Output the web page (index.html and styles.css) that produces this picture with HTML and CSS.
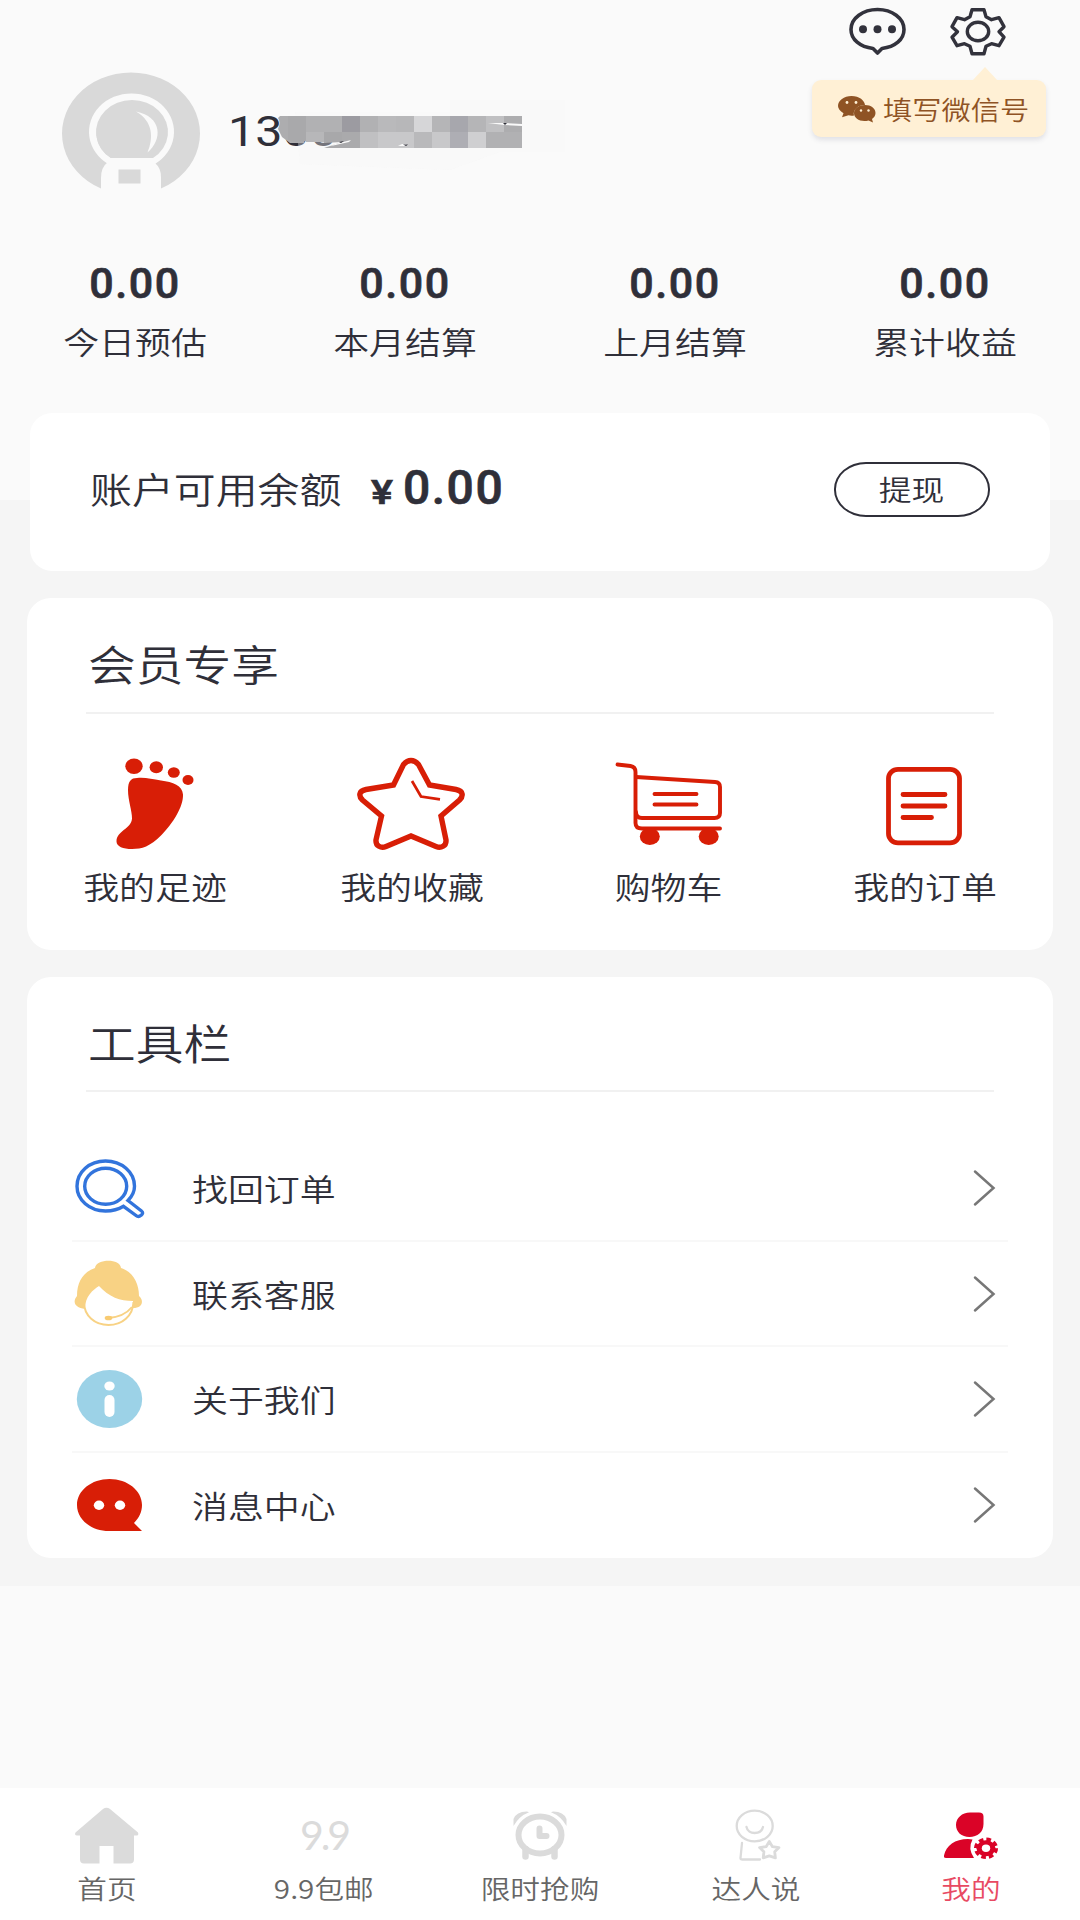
FILE: index.html
```html
<!DOCTYPE html>
<html lang="zh-CN">
<head>
<meta charset="utf-8">
<title>我的</title>
<link rel="stylesheet" href="styles.css">
</head>
<body>
<div class="page">
  <header class="profile">
    <div class="avatar">
      <svg width="140" height="120" viewBox="62 73 140 120">
        <path d="M101 188.500A69 61 0 1 1 161 188.500V177q0-9-6-14H109q-6 5-6 14z" fill="#d9d9d9"/>
        <path d="M108 164A42.500 38.500 0 1 1 155 164z" fill="#fafafa"/>
        <path d="M111 158A30 28.500 0 1 1 142 158z" fill="#d9d9d9"/>
        <path d="M111 158A36 32 0 1 1 153 158z" fill="#d9d9d9"/>
        <path d="M136 111.500c26 5 27 28 11.500 41 6-14 6-31-11.500-41z" fill="#fafafa"/>
        <path d="M101 193v-15q0-11 7-16h44q7 5 7 16v15z" fill="#fafafa"/>
        <path d="M118.500 169.500h22v14h-22z" fill="#d9d9d9"/>
      </svg>
    </div>
    <div class="phone">
      <span class="phone-number">1300</span>
      <svg class="mosaic" width="340" height="90" viewBox="270 90 340 90">
        <path d="M295 112h155v-12h115v52h-65l-50 18-150-6z" fill="#f5f5f5" opacity=".35"/>
        <path d="M280 116h24v27h-14l-8-6-4-8q3-7 0-11z" fill="#adadaf"/>
        <path d="M288 116h18v25l-12 1-6-2z" fill="#a9a9ab"/>
        <path d="M306 116h36v16h-36z" fill="#b1b1b3"/>
        <path d="M306 132h18v10h-18z" fill="#b7b7b9"/>
        <path d="M324 132h18v10l-18 1z" fill="#a8a8aa"/>
        <path d="M342 116h18v16h-18z" fill="#9c9ba1"/>
        <path d="M360 116h18v16h-18z" fill="#b1b1b3"/>
        <path d="M378 116h18v16h-18z" fill="#b9b9bb"/>
        <path d="M396 116h18v16h-18z" fill="#b7b7b9"/>
        <path d="M414 116h18v16h-18z" fill="#d6d6d8"/>
        <path d="M432 116h18v16h-18z" fill="#b5b5b7"/>
        <path d="M450 116h18v16h-18z" fill="#a7a7ad"/>
        <path d="M468 116h18v16h-18z" fill="#b5b5b7"/>
        <path d="M486 116h18v16h-18z" fill="#c0c0c2"/>
        <path d="M504 116h18v16h-18z" fill="#adadaf"/>
        <path d="M324 148l18-6v-10h18v16z" fill="#aaaaac"/>
        <path d="M360 132h18v16h-18z" fill="#c0c0c2"/>
        <path d="M378 132h36v16h-36z" fill="#c8c8ca"/>
        <path d="M414 132h18v16h-18z" fill="#b9b9bb"/>
        <path d="M432 132h18v16h-18z" fill="#c8c8ca"/>
        <path d="M450 132h18v16h-18z" fill="#aeaeb4"/>
        <path d="M468 132h18v16h-18z" fill="#cfcfd1"/>
        <path d="M486 132h36v16h-36z" fill="#b1b1b3"/>
        <path d="M335 144l16-4-2 2-18 4zM488 123l15 0 19 1v2l-18-1zM398 146l4-2h5l-2 2z" fill="#fafafa"/>
        <path d="M339 142l5-1-3 2zM503 123h4l-2 2zM403 144.500h5l-2 1.500z" fill="#2f2f38"/>
      </svg>
    </div>
    <div class="actions">
      <svg width="58" height="50" viewBox="848 7 58 50" fill="none" stroke="#32323c" stroke-width="3.600" stroke-linejoin="round">
        <path d="M877.500 53l-4.500-4.500C860 47 851 39.500 851 29.500 851 18 863 9.500 877.500 9.500S904 18 904 29.500C904 39.500 895 47 882 48.500z"/>
        <g fill="#32323c" stroke="none"><circle cx="863" cy="29.300" r="4"/><circle cx="877.500" cy="29.300" r="4"/><circle cx="892" cy="29.300" r="4"/></g>
      </svg>
      <svg width="58" height="50" viewBox="949 7 58 50" fill="none" stroke="#32323c" stroke-width="3.400" stroke-linejoin="round">
        <path d="M972 9.700h12l2 7 5.500 3 7.500-2 5 9-5 5 5 5.500-5 8.500-7.500-2-5.500 2.500-2 7.500h-12l-2-7.500-5.500-2.500-7.500 2-5-8.500 5.500-5.500-5.500-5 5-9 7.500 2 5.500-3z"/>
        <ellipse cx="978" cy="31.500" rx="10.700" ry="9.300"/>
      </svg>
    </div>
    <div class="tip">
      <svg width="38" height="28" viewBox="838 95 38 28">
        <path d="M851.500 96c8 0 13 4.500 13.500 9-7 0-12.500 5-11 10.500-2 .3-4 .2-5.500-.2l-6.500 2 1.500-4C840 111 838 108.500 838 106c0-5.500 6-10 13.500-10z" fill="#8f5324"/>
        <path d="M865 105c6 0 10.500 3.500 10.500 8 0 2.500-1.500 4.500-3.500 6l1 3.500-4.500-2c-8 2-14.500-2-14.500-7.500 0-4.500 5-8 11-8z" fill="#8f5324"/>
        <g fill="#fff0d5"><circle cx="847" cy="102.500" r="1.400"/><circle cx="856" cy="102.500" r="1.400"/><circle cx="861" cy="110.500" r="1.200"/><circle cx="868.500" cy="110.500" r="1.200"/></g>
      </svg>
      <span class="tip-text">填写微信号</span>
    </div>
  </header>

  <section class="stats">
    <div class="stat"><b class="stat-value">0.00</b><span class="stat-label">今日预估</span></div>
    <div class="stat"><b class="stat-value">0.00</b><span class="stat-label">本月结算</span></div>
    <div class="stat"><b class="stat-value">0.00</b><span class="stat-label">上月结算</span></div>
    <div class="stat"><b class="stat-value">0.00</b><span class="stat-label">累计收益</span></div>
  </section>

  <section class="card balance">
    <span class="balance-label">账户可用余额</span>
    <span class="balance-sum"><span class="yen">¥</span><span class="amount">0.00</span></span>
    <span class="withdraw"><span class="withdraw-text">提现</span></span>
  </section>

  <section class="card member">
    <h2 class="card-title"><span class="title-text">会员专享</span></h2>
    <div class="shortcuts">
      <div class="shortcut">
        <svg width="120" height="100" viewBox="95 755 120 100" fill="#d81e06">
          <ellipse cx="134" cy="766.300" rx="8.700" ry="7.700"/><ellipse cx="156.300" cy="767.300" rx="6.700" ry="6"/><ellipse cx="173.800" cy="772.500" rx="6" ry="5.200"/><ellipse cx="188" cy="780" rx="5.500" ry="4.900"/>
          <path d="M137 778c8-.8 15 1 24 2.500 12 1.500 21.500 5 22 14 .5 12-10 29-22 41-11 11-19 13.500-29 13.500-9 0-15.500-2.500-15.500-7.500 0-11 15-12.500 15.500-23 0-8-4-18-4-28.500 0-9 3-12 9-12z"/>
        </svg>
        <span class="shortcut-label">我的足迹</span>
      </div>
      <div class="shortcut">
        <svg width="120" height="100" viewBox="352 755 120 100" fill="none" stroke="#d81e06" stroke-width="5.400">
          <path d="M403.500 764.500Q407 760.500 411 760.500T418.500 764.500L429.500 785 456 789.500C463.500 791 463.500 796 459.500 800L441 816 446 840C446.500 846 441 848.500 436 846.500L411 836 386 846.500C381 848.500 375.500 846 376 840L381.500 816 362.500 800C358.500 796 358.500 791 366 789.500L393.500 785z"/>
          <path d="M412 781l9 15.500 19 2.800" stroke-width="2.700"/>
        </svg>
        <span class="shortcut-label">我的收藏</span>
      </div>
      <div class="shortcut">
        <svg width="120" height="100" viewBox="608 755 120 100" fill="none" stroke="#d81e06" stroke-width="3.900" stroke-linecap="round">
          <path d="M617.500 764.500l13 1.500q5 .8 5 6V823q0 5.500 6.500 5.500H720"/>
          <path d="M636 777l79 5q5 .3 5 5v26q0 5-5.500 5H642q-6 0-6-6M654.500 794h42M654.500 804.500h42"/>
          <g fill="#d81e06" stroke="none"><ellipse cx="649.800" cy="836.500" rx="10" ry="8.500"/><ellipse cx="708.700" cy="836.500" rx="10" ry="8.500"/></g>
        </svg>
        <span class="shortcut-label">购物车</span>
      </div>
      <div class="shortcut">
        <svg width="120" height="100" viewBox="865 755 120 100" fill="none" stroke="#d81e06" stroke-width="4.800" stroke-linecap="round">
          <rect x="888.500" y="769.300" width="71" height="73.500" rx="9.500" ry="9"/>
          <path d="M903 794.500h42M903 806h42M903 817.500h28.500"/>
        </svg>
        <span class="shortcut-label">我的订单</span>
      </div>
    </div>
  </section>

  <section class="card tools">
    <h2 class="card-title"><span class="title-text">工具栏</span></h2>
    <div class="rows">
      <div class="row">
        <svg width="74" height="72" viewBox="72 1152 74 72" fill="none" stroke="#3274dc" stroke-width="3.400">
          <path d="M128 1200.500l13.500 10.500q2.500 2-.5 4.300-2.500 2.200-5 .2L123.500 1206.300Q116 1211 105.500 1211C89.500 1211 77 1200 77 1186.300 77 1172 89.500 1161 105.500 1161S134.500 1172 134.500 1186.300Q134.500 1194 128 1200.500z"/>
          <ellipse cx="105.700" cy="1186.200" rx="21" ry="18"/>
        </svg>
        <span class="row-label">找回订单</span>
        <svg class="chevron" width="24" height="40" viewBox="0 0 24 40"><path d="M3 3.500L21.500 20 3 36.500"/></svg>
      </div>
      <div class="row">
        <svg width="74" height="72" viewBox="72 1258 74 72">
          <path d="M84 1302C84 1316 95 1325 108.500 1325S133 1316 133.500 1302" fill="none" stroke="#f8d284" stroke-width="2"/>
          <path d="M132 1307q-8 10-24 11" fill="none" stroke="#f8d284" stroke-width="2"/><ellipse cx="108.500" cy="1318" rx="3.800" ry="2.300" fill="#f8cb72"/>
          <path d="M95 1268c1-9 25-10 26 0 12 4 18 15 18 28 5 4 4 12-6 12v-7c-13 0-24-4-34-15-6 4-14 10-14 23-10-1-13-7-8-13 0-14 6-24 18-28z" fill="#f8d284"/>
        </svg>
        <span class="row-label">联系客服</span>
        <svg class="chevron" width="24" height="40" viewBox="0 0 24 40"><path d="M3 3.500L21.500 20 3 36.500"/></svg>
      </div>
      <div class="row">
        <svg width="74" height="72" viewBox="72 1363 74 72">
          <ellipse cx="109.500" cy="1399" rx="32.700" ry="28.900" fill="#9cd2e7"/>
          <ellipse cx="109.500" cy="1386" rx="5.200" ry="4.600" fill="#fff"/><rect x="104.500" y="1395" width="10" height="22" rx="5" fill="#fff"/>
        </svg>
        <span class="row-label">关于我们</span>
        <svg class="chevron" width="24" height="40" viewBox="0 0 24 40"><path d="M3 3.500L21.500 20 3 36.500"/></svg>
      </div>
      <div class="row">
        <svg width="74" height="72" viewBox="72 1469 74 72">
          <path d="M109.500 1479C127.500 1479 142 1490.500 142 1505 142 1512 139 1518 134 1523l8 8h-33C91 1531 77 1519.500 77 1505S91.500 1479 109.500 1479z" fill="#d81e06"/>
          <ellipse cx="99" cy="1505.300" rx="5.200" ry="4.700" fill="#fff"/><ellipse cx="120" cy="1505.300" rx="5.200" ry="4.700" fill="#fff"/>
        </svg>
        <span class="row-label">消息中心</span>
        <svg class="chevron" width="24" height="40" viewBox="0 0 24 40"><path d="M3 3.500L21.500 20 3 36.500"/></svg>
      </div>
    </div>
  </section>

  <nav class="tabbar">
    <div class="tab">
      <svg width="70" height="66" viewBox="73 1802 70 66" fill="#dbdbdb"><path d="M104 1809q3.500-2.500 7 0l28 23.500q1 2.500-1 3h-3v24q0 4-4 4h-16.500v-17.500h-14v17.500H85q-4 0-4-4v-24h-3q-3-.5-1.500-3z"/></svg>
      <span class="tab-label">首页</span>
    </div>
    <div class="tab">
      <span class="nine">9.9</span>
      <span class="tab-label">9.9包邮</span>
    </div>
    <div class="tab">
      <svg width="70" height="66" viewBox="505 1802 70 66" fill="none" stroke="#dbdbdb">
        <ellipse cx="540" cy="1835" rx="21.500" ry="18.500" stroke-width="6"/>
        <path d="M513.500 1826v-7q3-7.500 13-7.500 1.500 0 2.500.7-10 3.800-15.500 13.800zM566.500 1826v-7q-3-7.500-13-7.500-1.500 0-2.500.7 10 3.800 15.500 13.800z" fill="#dbdbdb" stroke="none"/>
        <path d="M525.500 1849v7.500M554.500 1849v7.500" stroke-width="6.500" stroke-linecap="round"/>
        <path d="M539.500 1828.500v7.500h7" stroke-width="6" stroke-linecap="round" stroke-linejoin="round"/>
      </svg>
      <span class="tab-label">限时抢购</span>
    </div>
    <div class="tab">
      <svg width="70" height="66" viewBox="721 1802 70 66" fill="none" stroke="#dbdbdb" stroke-width="2.300" stroke-linecap="round" stroke-linejoin="round">
        <ellipse cx="754.700" cy="1826" rx="18" ry="15.300"/>
        <path d="M746.500 1827c1.500 8 14.500 8 16.500 0M742 1843l-1.500 15q0 1.500 2 1.500H760"/>
        <path d="M769.300 1841.500l3.200 5.200 6.500.9-4.300 4.200.7 6-6.100-2-6.100 2 .7-6-4.300-4.200 6.500-.9z" stroke-width="2.800"/>
      </svg>
      <span class="tab-label">达人说</span>
    </div>
    <div class="tab active">
      <svg width="70" height="66" viewBox="937 1802 70 66">
        <path d="M971 1812.500h9q4.500 0 4.500 4v7.500c0 8-6 13-14 13s-13.500-5-13.500-12 6-12.500 14-12.500zM973.500 1839.500q-5 9 1.500 18.500H947q-2.500 0-2-2.500c2-10 11-16.500 24-16.500z" fill="#da0327"/>
        <ellipse cx="987" cy="1848.300" rx="9.500" ry="8" fill="#da0327"/>
        <ellipse cx="987" cy="1848.300" rx="10.300" ry="9" fill="none" stroke="#da0327" stroke-width="3.500" stroke-dasharray="4.600 3"/>
        <ellipse cx="987" cy="1848.300" rx="4.200" ry="3.700" fill="#fff"/>
      </svg>
      <span class="tab-label">我的</span>
    </div>
  </nav>
</div>
</body>
</html>
```

FILE: styles.css
```css
* { box-sizing: border-box; }
body {
  margin: 0;
  background: #fafafa;
  color: #2f2f39;
  font-family: "Noto Sans CJK SC", "Noto Sans", sans-serif;
  font-weight: 350;
}
svg { display: block; flex: none; overflow: visible; }
.page {
  width: 1080px;
  height: 1920px;
  overflow: hidden;
  display: flex;
  flex-direction: column;
  background: linear-gradient(#fafafa 500px, #f5f5f5 500px, #f5f5f5 1586px, #fafafa 1586px);
}

/* Header */
.profile { position: relative; display: flex; height: 252px; }
.avatar { padding: 73px 0 0 62px; }
.phone { position: relative; padding: 107px 0 0 26px; flex: 1; }
.phone-number {
  display: inline-block;
  font: 400 42.500px/50px Roboto, sans-serif;
  transform: scaleX(1.14);
  transform-origin: left;
}
.mosaic { position: absolute; left: 68px; top: 90px; }
.actions { display: flex; gap: 43px; padding: 7px 73px 0 0; }
.tip {
  position: absolute;
  left: 812px;
  top: 80px;
  width: 234px;
  height: 57px;
  padding: 0 0 0 26px;
  display: flex;
  align-items: center;
  gap: 7px;
  border-radius: 9px;
  background: #fff0d5;
  box-shadow: 0 3px 5px rgba(60, 60, 90, .13);
  color: #8f5324;
}
.tip::before {
  content: "";
  position: absolute;
  left: 160px;
  top: -13px;
  border: solid transparent;
  border-width: 0 13px 14px;
  border-bottom-color: #fff0d5;
}
.tip svg { margin-top: 1px; }
.tip-text { font-size: 26px; line-height: 36px; transform: scaleX(1.125); transform-origin: left; white-space: nowrap; }

/* Earnings */
.stats { display: grid; grid-template-columns: repeat(4, 1fr); height: 161px; }
.stat { display: flex; flex-direction: column; align-items: center; }
.stat-value {
  font: 500 43px/62px Roboto, sans-serif;
  letter-spacing: 1.500px;
  -webkit-text-stroke: .7px currentColor;
}
.stat-label { font-size: 31px; line-height: 53px; transform: scaleX(1.158); }

/* Cards */
.card { background: #fff; margin: 0 27px; border-radius: 24px; flex: none; }
.card-title {
  margin: 0 59px;
  padding-left: 2px;
  height: 117px;
  border-bottom: 2px solid #f1f1f1;
  font-size: 41.500px;
  font-weight: 350;
  line-height: 131px;
}
.title-text { display: inline-block; transform: scaleX(1.15); transform-origin: left; }
.balance {
  margin: 0 30px 27px;
  height: 158px;
  padding: 0 60px;
  border-radius: 22px;
  display: flex;
  align-items: center;
}
.balance-label { width: 281px; font-size: 36.500px; line-height: 50px; padding-bottom: 6px; white-space: nowrap; transform: scaleX(1.148); transform-origin: left; }
.balance-sum {
  display: flex;
  align-items: baseline;
  flex: 1;
  padding-bottom: 9px;
  font-family: Roboto, sans-serif;
  font-weight: 500;
  -webkit-text-stroke: .7px currentColor;
}
.yen { font-size: 33px; width: 32px; transform: scaleX(1.25); transform-origin: left; }
.amount { font-size: 48px; letter-spacing: 1.500px; }
.withdraw {
  width: 156px;
  height: 55px;
  margin-bottom: 5px;
  display: grid;
  place-items: center;
  border: 2px solid #2f2f39;
  border-radius: 32px / 27px;
}
.withdraw-text { font-size: 28.500px; line-height: 46px; padding-bottom: 2px; transform: scaleX(1.15); }

.member { height: 352px; margin-bottom: 27px; }
.member .card-title { height: 116px; line-height: 130px; }
.shortcuts { display: grid; grid-template-columns: repeat(4, 1fr); padding-top: 41px; }
.shortcut { display: flex; flex-direction: column; align-items: center; }
.shortcut-label { font-size: 31px; line-height: 48px; margin-top: 7px; transform: scaleX(1.158); }

.tools { height: 581px; }
.tools .card-title { height: 115px; line-height: 130px; }
.rows { padding: 44px 45px 0; }
.row { display: flex; align-items: center; height: 105.700px; border-bottom: 2px solid #f8f8f8; }
.row:last-child { border-color: transparent; }
.row-label { flex: 1; margin-left: 46px; font-size: 31px; line-height: 48px; transform: scaleX(1.158); transform-origin: left; }
.chevron { margin-right: 12px; fill: none; stroke: #777; stroke-width: 2.500; stroke-linecap: round; }

/* Bottom tabs */
.tabbar { margin-top: auto; flex: none; height: 132px; display: grid; grid-template-columns: repeat(5, 1fr); background: #fff; }
.tab { display: flex; flex-direction: column; align-items: center; padding-top: 14px; color: #666; }
.tab:first-child, .tab:last-child { padding-right: 2px; }
.nine { height: 66px; font: 400 41px/66px Lato, sans-serif; letter-spacing: -3px; color: #dbdbdb; }
.tab-label { font-size: 26px; line-height: 40px; transform: scaleX(1.14); }
.active { color: #e84a63; }
```
